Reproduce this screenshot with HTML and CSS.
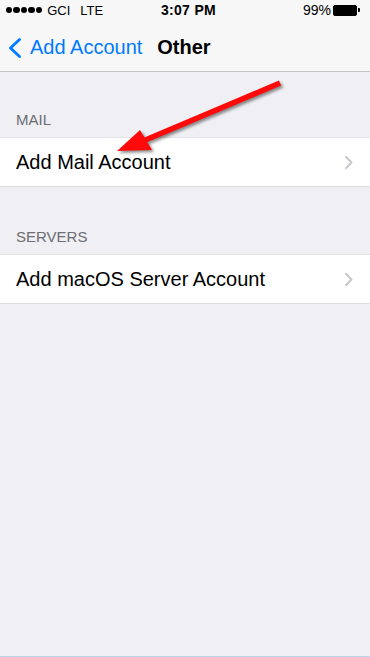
FILE: index.html
```html
<!DOCTYPE html>
<html>
<head>
<meta charset="utf-8">
<link rel="stylesheet" href="styles.css">
</head>
<body>
<div class="screen">
  <div class="statusbar">
    <div class="sb-left">
      <span class="dots"><i></i><i></i><i></i><i></i><i></i></span>
      <span class="carrier">GCI</span>
      <span class="net">LTE</span>
    </div>
    <div class="sb-time">3:07 PM</div>
    <div class="sb-right">
      <span class="pct">99%</span>
      <span class="battery"><span class="batt-body"></span><span class="batt-nub"></span></span>
    </div>
  </div>
  <div class="navbar">
    <div class="back">
      <svg class="back-chev" width="15" height="20" viewBox="0 0 15 20"><polyline points="12.5,1.5 3.5,10 12.5,18.5" fill="none" stroke="#007aff" stroke-width="2.8" stroke-linecap="round" stroke-linejoin="round"/></svg>
      <span class="back-label">Add Account</span>
    </div>
    <div class="title">Other</div>
  </div>
  <div class="content">
    <div class="section-header first">MAIL</div>
    <div class="row">
      <span class="row-label">Add Mail Account</span>
      <svg class="chev" width="9" height="15" viewBox="0 0 9 15"><polyline points="1.5,1.2 7.5,7.5 1.5,13.8" fill="none" stroke="#c7c7cc" stroke-width="2"/></svg>
    </div>
    <div class="section-header">SERVERS</div>
    <div class="row">
      <span class="row-label">Add macOS Server Account</span>
      <svg class="chev" width="9" height="15" viewBox="0 0 9 15"><polyline points="1.5,1.2 7.5,7.5 1.5,13.8" fill="none" stroke="#c7c7cc" stroke-width="2"/></svg>
    </div>
  </div>
  <div class="bottom-line"></div>
  <svg class="arrow" width="370" height="657" viewBox="0 0 370 657">
    <line x1="143" y1="141" x2="280" y2="83" stroke="#ff0a0a" stroke-width="5.5"/>
    <polygon points="117,151 140,130 152,150" fill="#ff0a0a"/>
  </svg>
</div>
</body>
</html>
```
FILE: styles.css
```css
* { box-sizing: border-box; }
html, body { margin: 0; padding: 0; }
body {
  font-family: "Liberation Sans", Arial, sans-serif;
  background: #efeff4;
  width: 370px;
  height: 657px;
  overflow: hidden;
}
.screen {
  position: relative;
  width: 370px;
  height: 657px;
  display: flex;
  flex-direction: column;
  background: #efeff4;
}
.statusbar {
  height: 20px;
  background: #f7f7f7;
  display: flex;
  align-items: center;
  justify-content: space-between;
  padding: 0 10px 0 6px;
  color: #000;
  position: relative;
}
.sb-left {
  display: flex;
  align-items: center;
  font-size: 13px;
  width: 120px;
}
.dots { display: flex; gap: 1.2px; margin-right: 5px; }
.dots i {
  display: block;
  width: 6.3px;
  height: 6.3px;
  border-radius: 50%;
  background: #000;
}
.carrier { margin-right: 10px; }
.sb-time {
  font-size: 14px;
  font-weight: bold;
  letter-spacing: 0.3px;
  margin-left: 11px;
}
.sb-right {
  display: flex;
  align-items: center;
  justify-content: flex-end;
  width: 120px;
  font-size: 14px;
}
.pct { margin-right: 2px; }
.battery { display: flex; align-items: center; }
.batt-body {
  display: block;
  width: 24px;
  height: 11px;
  background: #000;
  border: 1px solid #000;
  border-radius: 2px;
}
.batt-nub {
  display: block;
  width: 2px;
  height: 4px;
  background: #000;
  border-radius: 0 1px 1px 0;
  margin-left: 1px;
}
.navbar {
  height: 52px;
  background: #f7f7f7;
  border-bottom: 1px solid #c4c4c8;
  display: flex;
  align-items: flex-start;
  padding: 15px 0 0 7px;
}
.back {
  display: flex;
  align-items: center;
  color: #007aff;
  font-size: 20px;
  line-height: 24px;
}
.back-chev { margin-right: 8px; margin-top: 1px; }
.title {
  font-size: 20px;
  font-weight: bold;
  line-height: 24px;
  margin-left: 15px;
  color: #000;
}
.content { flex: 1; }
.section-header {
  font-size: 15px;
  line-height: 18px;
  color: #6d6d72;
  padding: 41px 16px 8px;
}
.section-header.first { padding-top: 39px; }
.row {
  height: 50px;
  background: #fff;
  border-top: 1px solid #e3e3e6;
  border-bottom: 1px solid #dcdce0;
  display: flex;
  align-items: center;
  justify-content: space-between;
  padding: 0 17px 0 16px;
}
.row-label {
  font-size: 20px;
  color: #000;
}
.chev { margin-top: 1px; }
.bottom-line {
  height: 1px;
  background: #b8d2ee;
}
.arrow {
  position: absolute;
  left: 0;
  top: 0;
  pointer-events: none;
  filter: drop-shadow(2px 2px 1.5px rgba(0,0,0,0.45));
}
```
